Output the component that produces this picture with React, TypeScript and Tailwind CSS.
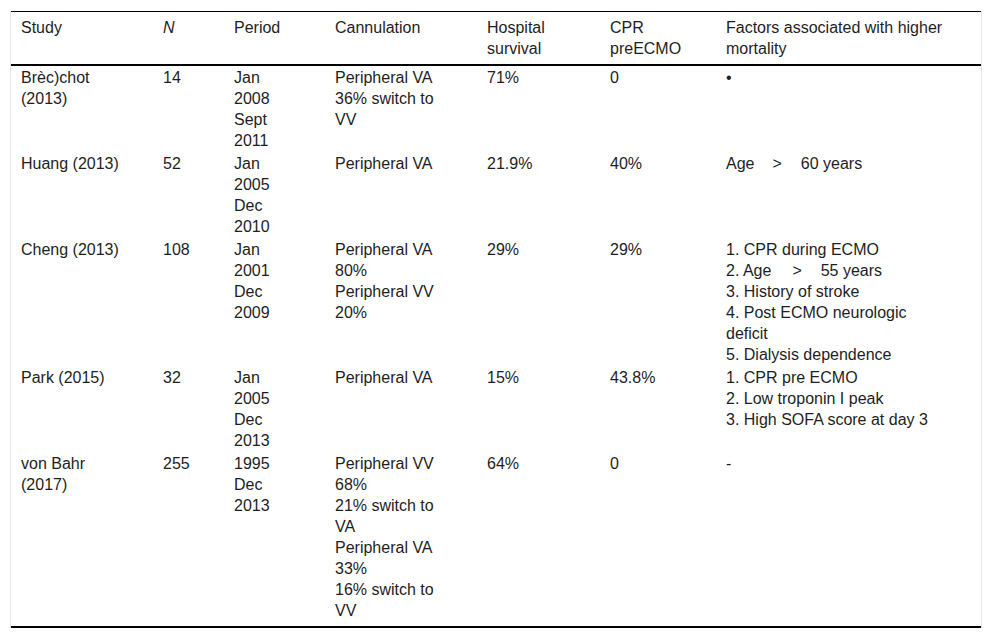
import React from "react";

type Cell = React.ReactNode;

const L = (...lines: React.ReactNode[]) => (
  <>
    {lines.map((l, i) => (
      <React.Fragment key={i}>
        {i > 0 && <br />}
        {l}
      </React.Fragment>
    ))}
  </>
);

const rows: Cell[][] = [
  [
    L("Brèc)chot", "(2013)"),
    "14",
    L("Jan", "2008", "Sept", "2011"),
    L("Peripheral VA", "36% switch to", "VV"),
    "71%",
    "0",
    "•",
  ],
  [
    "Huang (2013)",
    "52",
    L("Jan", "2005", "Dec", "2010"),
    "Peripheral VA",
    "21.9%",
    "40%",
    <>
      Age<span className="ml-[18px] mr-[19px]">&gt;</span>60 years
    </>,
  ],
  [
    "Cheng (2013)",
    "108",
    L("Jan", "2001", "Dec", "2009"),
    L("Peripheral VA", "80%", "Peripheral VV", "20%"),
    "29%",
    "29%",
    L(
      "1. CPR during ECMO",
      <>
        2. Age<span className="ml-[21px] mr-[19px]">&gt;</span>55 years
      </>,
      "3. History of stroke",
      "4. Post ECMO neurologic",
      "deficit",
      "5. Dialysis dependence"
    ),
  ],
  [
    "Park (2015)",
    "32",
    L("Jan", "2005", "Dec", "2013"),
    "Peripheral VA",
    "15%",
    "43.8%",
    L("1. CPR pre ECMO", "2. Low troponin I peak", "3. High SOFA score at day 3"),
  ],
  [
    L("von Bahr", "(2017)"),
    "255",
    L("1995", "Dec", "2013"),
    L(
      "Peripheral VV",
      "68%",
      "21% switch to",
      "VA",
      "Peripheral VA",
      "33%",
      "16% switch to",
      "VV"
    ),
    "64%",
    "0",
    "-",
  ],
];

const headCls =
  "border-b-2 border-black pl-[10px] pt-[5px] pb-[5px] text-left align-top font-normal";

export default function App() {
  return (
    <div
      className="bg-white px-[10px] pt-[11px] text-[16px] leading-[21px] text-[#1e1e1e]"
      style={{ fontFamily: '"Liberation Sans", Arial, sans-serif' }}
    >
      <div className="border-x border-[#e6e6e6]">
        <div className="border-t border-black border-b-2 pb-[4px]">
          <table className="w-full table-fixed border-separate border-spacing-0">
            <colgroup>
              <col className="w-[142px]" />
              <col className="w-[71px]" />
              <col className="w-[101px]" />
              <col className="w-[152px]" />
              <col className="w-[123px]" />
              <col className="w-[116px]" />
              <col />
            </colgroup>
            <thead>
              <tr>
                <th className={headCls}>Study</th>
                <th className={headCls + " italic"}>N</th>
                <th className={headCls}>Period</th>
                <th className={headCls}>Cannulation</th>
                <th className={headCls}>
                  Hospital
                  <br />
                  survival
                </th>
                <th className={headCls}>
                  CPR
                  <br />
                  preECMO
                </th>
                <th className={headCls}>
                  Factors associated with higher
                  <br />
                  mortality
                </th>
              </tr>
            </thead>
            <tbody>
              {rows.map((r, i) => (
                <tr key={i}>
                  {r.map((c, j) => (
                    <td
                      key={j}
                      className="pl-[10px] pt-px pb-px text-left align-top whitespace-nowrap"
                    >
                      {c}
                    </td>
                  ))}
                </tr>
              ))}
            </tbody>
          </table>
        </div>
      </div>
    </div>
  );
}
